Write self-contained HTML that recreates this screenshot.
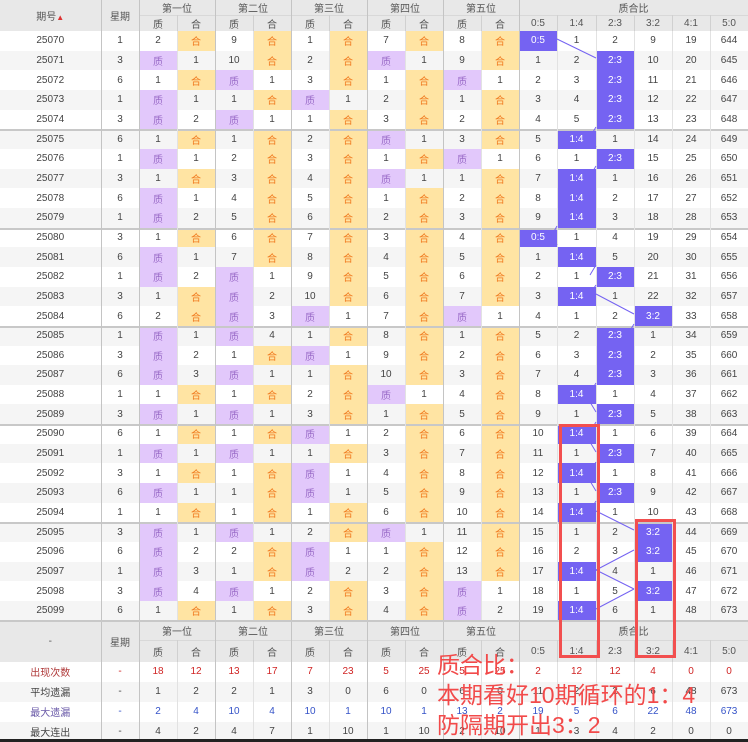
<!DOCTYPE html>
<html><head><meta charset="utf-8"><style>
*{margin:0;padding:0;box-sizing:border-box}
body{width:748px;height:742px;overflow:hidden;background:#fff;font-family:"Liberation Sans","Noto Sans CJK SC",sans-serif;font-size:10px;color:#444;position:relative}
table{border-collapse:collapse;table-layout:fixed;width:748px;position:absolute;left:0;top:0}
td{text-align:center;padding:0;border-right:1px solid #e2e2e2;white-space:nowrap;overflow:hidden}
td.b,th.b{border-right:1px solid #c4c4c4}
.hd td{background:#e8e8e8;color:#555;border-right:1px solid #d0d0d0}
.hd td.b{border-right:1px solid #c4c4c4}
tr.h1 td{height:14px}tr.h2 td{height:15px;border-top:1px solid #d8d8d8}
tr.d td{height:19.67px}
tr.d:nth-child(even) td{background:#f5f5f5}
tr.g td{box-shadow:inset 0 2px 0 #c8c8c8}
td.q{background:#e2c8fb!important;color:#9a6bc8}
td.h{background:#ffe4a3!important;color:#f07a1e}
td.r{background:#7563f2!important;color:#fff}
tr.f1 td{height:20px;border-top:2px solid #c8c8c8}tr.f2 td{height:21px;border-top:1px solid #d8d8d8}
tr.s td{height:20px}
tr.s:nth-child(even) td{background:#f5f5f5}
.red td{color:#d02424}.red td:first-child{color:#b03a3a}
.blu td{color:#3553c8}.blu td:first-child{color:#6a5aa8}
.box{position:absolute;border:3px solid #f24f4f}
.note{position:absolute;left:437px;top:650px;font-size:23px;line-height:30px;color:#f24a4a;white-space:nowrap}
</style></head><body>
<table>
<colgroup><col style="width:101px"><col style="width:38px"><col style="width:38px"><col style="width:38px"><col style="width:38px"><col style="width:38px"><col style="width:38px"><col style="width:38px"><col style="width:38px"><col style="width:38px"><col style="width:38px"><col style="width:38px"><col style="width:38px"><col style="width:39px"><col style="width:38px"><col style="width:38px"><col style="width:38px"><col style="width:38px"></colgroup>
<tr class="hd h1"><td rowspan="2" class="b">期号<span style="color:#d33;font-size:8px">▲</span></td><td rowspan="2" class="b">星期</td><td colspan="2" class="b">第一位</td><td colspan="2" class="b">第二位</td><td colspan="2" class="b">第三位</td><td colspan="2" class="b">第四位</td><td colspan="2" class="b">第五位</td><td colspan="6">质合比</td></tr>
<tr class="hd h2"><td>质</td><td class="b">合</td><td>质</td><td class="b">合</td><td>质</td><td class="b">合</td><td>质</td><td class="b">合</td><td>质</td><td class="b">合</td><td>0:5</td><td>1:4</td><td>2:3</td><td>3:2</td><td>4:1</td><td>5:0</td></tr>
<tr class="d"><td class="b">25070</td><td class="b">1</td><td>2</td><td class="h b">合</td><td>9</td><td class="h b">合</td><td>1</td><td class="h b">合</td><td>7</td><td class="h b">合</td><td>8</td><td class="h b">合</td><td class="r">0:5</td><td>1</td><td>2</td><td>9</td><td>19</td><td>644</td></tr>
<tr class="d"><td class="b">25071</td><td class="b">3</td><td class="q">质</td><td class="b">1</td><td>10</td><td class="h b">合</td><td>2</td><td class="h b">合</td><td class="q">质</td><td class="b">1</td><td>9</td><td class="h b">合</td><td>1</td><td>2</td><td class="r">2:3</td><td>10</td><td>20</td><td>645</td></tr>
<tr class="d"><td class="b">25072</td><td class="b">6</td><td>1</td><td class="h b">合</td><td class="q">质</td><td class="b">1</td><td>3</td><td class="h b">合</td><td>1</td><td class="h b">合</td><td class="q">质</td><td class="b">1</td><td>2</td><td>3</td><td class="r">2:3</td><td>11</td><td>21</td><td>646</td></tr>
<tr class="d"><td class="b">25073</td><td class="b">1</td><td class="q">质</td><td class="b">1</td><td>1</td><td class="h b">合</td><td class="q">质</td><td class="b">1</td><td>2</td><td class="h b">合</td><td>1</td><td class="h b">合</td><td>3</td><td>4</td><td class="r">2:3</td><td>12</td><td>22</td><td>647</td></tr>
<tr class="d"><td class="b">25074</td><td class="b">3</td><td class="q">质</td><td class="b">2</td><td class="q">质</td><td class="b">1</td><td>1</td><td class="h b">合</td><td>3</td><td class="h b">合</td><td>2</td><td class="h b">合</td><td>4</td><td>5</td><td class="r">2:3</td><td>13</td><td>23</td><td>648</td></tr>
<tr class="d g"><td class="b">25075</td><td class="b">6</td><td>1</td><td class="h b">合</td><td>1</td><td class="h b">合</td><td>2</td><td class="h b">合</td><td class="q">质</td><td class="b">1</td><td>3</td><td class="h b">合</td><td>5</td><td class="r">1:4</td><td>1</td><td>14</td><td>24</td><td>649</td></tr>
<tr class="d"><td class="b">25076</td><td class="b">1</td><td class="q">质</td><td class="b">1</td><td>2</td><td class="h b">合</td><td>3</td><td class="h b">合</td><td>1</td><td class="h b">合</td><td class="q">质</td><td class="b">1</td><td>6</td><td>1</td><td class="r">2:3</td><td>15</td><td>25</td><td>650</td></tr>
<tr class="d"><td class="b">25077</td><td class="b">3</td><td>1</td><td class="h b">合</td><td>3</td><td class="h b">合</td><td>4</td><td class="h b">合</td><td class="q">质</td><td class="b">1</td><td>1</td><td class="h b">合</td><td>7</td><td class="r">1:4</td><td>1</td><td>16</td><td>26</td><td>651</td></tr>
<tr class="d"><td class="b">25078</td><td class="b">6</td><td class="q">质</td><td class="b">1</td><td>4</td><td class="h b">合</td><td>5</td><td class="h b">合</td><td>1</td><td class="h b">合</td><td>2</td><td class="h b">合</td><td>8</td><td class="r">1:4</td><td>2</td><td>17</td><td>27</td><td>652</td></tr>
<tr class="d"><td class="b">25079</td><td class="b">1</td><td class="q">质</td><td class="b">2</td><td>5</td><td class="h b">合</td><td>6</td><td class="h b">合</td><td>2</td><td class="h b">合</td><td>3</td><td class="h b">合</td><td>9</td><td class="r">1:4</td><td>3</td><td>18</td><td>28</td><td>653</td></tr>
<tr class="d g"><td class="b">25080</td><td class="b">3</td><td>1</td><td class="h b">合</td><td>6</td><td class="h b">合</td><td>7</td><td class="h b">合</td><td>3</td><td class="h b">合</td><td>4</td><td class="h b">合</td><td class="r">0:5</td><td>1</td><td>4</td><td>19</td><td>29</td><td>654</td></tr>
<tr class="d"><td class="b">25081</td><td class="b">6</td><td class="q">质</td><td class="b">1</td><td>7</td><td class="h b">合</td><td>8</td><td class="h b">合</td><td>4</td><td class="h b">合</td><td>5</td><td class="h b">合</td><td>1</td><td class="r">1:4</td><td>5</td><td>20</td><td>30</td><td>655</td></tr>
<tr class="d"><td class="b">25082</td><td class="b">1</td><td class="q">质</td><td class="b">2</td><td class="q">质</td><td class="b">1</td><td>9</td><td class="h b">合</td><td>5</td><td class="h b">合</td><td>6</td><td class="h b">合</td><td>2</td><td>1</td><td class="r">2:3</td><td>21</td><td>31</td><td>656</td></tr>
<tr class="d"><td class="b">25083</td><td class="b">3</td><td>1</td><td class="h b">合</td><td class="q">质</td><td class="b">2</td><td>10</td><td class="h b">合</td><td>6</td><td class="h b">合</td><td>7</td><td class="h b">合</td><td>3</td><td class="r">1:4</td><td>1</td><td>22</td><td>32</td><td>657</td></tr>
<tr class="d"><td class="b">25084</td><td class="b">6</td><td>2</td><td class="h b">合</td><td class="q">质</td><td class="b">3</td><td class="q">质</td><td class="b">1</td><td>7</td><td class="h b">合</td><td class="q">质</td><td class="b">1</td><td>4</td><td>1</td><td>2</td><td class="r">3:2</td><td>33</td><td>658</td></tr>
<tr class="d g"><td class="b">25085</td><td class="b">1</td><td class="q">质</td><td class="b">1</td><td class="q">质</td><td class="b">4</td><td>1</td><td class="h b">合</td><td>8</td><td class="h b">合</td><td>1</td><td class="h b">合</td><td>5</td><td>2</td><td class="r">2:3</td><td>1</td><td>34</td><td>659</td></tr>
<tr class="d"><td class="b">25086</td><td class="b">3</td><td class="q">质</td><td class="b">2</td><td>1</td><td class="h b">合</td><td class="q">质</td><td class="b">1</td><td>9</td><td class="h b">合</td><td>2</td><td class="h b">合</td><td>6</td><td>3</td><td class="r">2:3</td><td>2</td><td>35</td><td>660</td></tr>
<tr class="d"><td class="b">25087</td><td class="b">6</td><td class="q">质</td><td class="b">3</td><td class="q">质</td><td class="b">1</td><td>1</td><td class="h b">合</td><td>10</td><td class="h b">合</td><td>3</td><td class="h b">合</td><td>7</td><td>4</td><td class="r">2:3</td><td>3</td><td>36</td><td>661</td></tr>
<tr class="d"><td class="b">25088</td><td class="b">1</td><td>1</td><td class="h b">合</td><td>1</td><td class="h b">合</td><td>2</td><td class="h b">合</td><td class="q">质</td><td class="b">1</td><td>4</td><td class="h b">合</td><td>8</td><td class="r">1:4</td><td>1</td><td>4</td><td>37</td><td>662</td></tr>
<tr class="d"><td class="b">25089</td><td class="b">3</td><td class="q">质</td><td class="b">1</td><td class="q">质</td><td class="b">1</td><td>3</td><td class="h b">合</td><td>1</td><td class="h b">合</td><td>5</td><td class="h b">合</td><td>9</td><td>1</td><td class="r">2:3</td><td>5</td><td>38</td><td>663</td></tr>
<tr class="d g"><td class="b">25090</td><td class="b">6</td><td>1</td><td class="h b">合</td><td>1</td><td class="h b">合</td><td class="q">质</td><td class="b">1</td><td>2</td><td class="h b">合</td><td>6</td><td class="h b">合</td><td>10</td><td class="r">1:4</td><td>1</td><td>6</td><td>39</td><td>664</td></tr>
<tr class="d"><td class="b">25091</td><td class="b">1</td><td class="q">质</td><td class="b">1</td><td class="q">质</td><td class="b">1</td><td>1</td><td class="h b">合</td><td>3</td><td class="h b">合</td><td>7</td><td class="h b">合</td><td>11</td><td>1</td><td class="r">2:3</td><td>7</td><td>40</td><td>665</td></tr>
<tr class="d"><td class="b">25092</td><td class="b">3</td><td>1</td><td class="h b">合</td><td>1</td><td class="h b">合</td><td class="q">质</td><td class="b">1</td><td>4</td><td class="h b">合</td><td>8</td><td class="h b">合</td><td>12</td><td class="r">1:4</td><td>1</td><td>8</td><td>41</td><td>666</td></tr>
<tr class="d"><td class="b">25093</td><td class="b">6</td><td class="q">质</td><td class="b">1</td><td>1</td><td class="h b">合</td><td class="q">质</td><td class="b">1</td><td>5</td><td class="h b">合</td><td>9</td><td class="h b">合</td><td>13</td><td>1</td><td class="r">2:3</td><td>9</td><td>42</td><td>667</td></tr>
<tr class="d"><td class="b">25094</td><td class="b">1</td><td>1</td><td class="h b">合</td><td>1</td><td class="h b">合</td><td>1</td><td class="h b">合</td><td>6</td><td class="h b">合</td><td>10</td><td class="h b">合</td><td>14</td><td class="r">1:4</td><td>1</td><td>10</td><td>43</td><td>668</td></tr>
<tr class="d g"><td class="b">25095</td><td class="b">3</td><td class="q">质</td><td class="b">1</td><td class="q">质</td><td class="b">1</td><td>2</td><td class="h b">合</td><td class="q">质</td><td class="b">1</td><td>11</td><td class="h b">合</td><td>15</td><td>1</td><td>2</td><td class="r">3:2</td><td>44</td><td>669</td></tr>
<tr class="d"><td class="b">25096</td><td class="b">6</td><td class="q">质</td><td class="b">2</td><td>2</td><td class="h b">合</td><td class="q">质</td><td class="b">1</td><td>1</td><td class="h b">合</td><td>12</td><td class="h b">合</td><td>16</td><td>2</td><td>3</td><td class="r">3:2</td><td>45</td><td>670</td></tr>
<tr class="d"><td class="b">25097</td><td class="b">1</td><td class="q">质</td><td class="b">3</td><td>1</td><td class="h b">合</td><td class="q">质</td><td class="b">2</td><td>2</td><td class="h b">合</td><td>13</td><td class="h b">合</td><td>17</td><td class="r">1:4</td><td>4</td><td>1</td><td>46</td><td>671</td></tr>
<tr class="d"><td class="b">25098</td><td class="b">3</td><td class="q">质</td><td class="b">4</td><td class="q">质</td><td class="b">1</td><td>2</td><td class="h b">合</td><td>3</td><td class="h b">合</td><td class="q">质</td><td class="b">1</td><td>18</td><td>1</td><td>5</td><td class="r">3:2</td><td>47</td><td>672</td></tr>
<tr class="d"><td class="b">25099</td><td class="b">6</td><td>1</td><td class="h b">合</td><td>1</td><td class="h b">合</td><td>3</td><td class="h b">合</td><td>4</td><td class="h b">合</td><td class="q">质</td><td class="b">2</td><td>19</td><td class="r">1:4</td><td>6</td><td>1</td><td>48</td><td>673</td></tr>
<tr class="hd f1"><td rowspan="2" class="b">-</td><td rowspan="2" class="b">星期</td><td colspan="2" class="b">第一位</td><td colspan="2" class="b">第二位</td><td colspan="2" class="b">第三位</td><td colspan="2" class="b">第四位</td><td colspan="2" class="b">第五位</td><td colspan="6">质合比</td></tr>
<tr class="hd f2"><td>质</td><td class="b">合</td><td>质</td><td class="b">合</td><td>质</td><td class="b">合</td><td>质</td><td class="b">合</td><td>质</td><td class="b">合</td><td>0:5</td><td>1:4</td><td>2:3</td><td>3:2</td><td>4:1</td><td>5:0</td></tr>
<tr class="s red"><td class="b">出现次数</td><td class="b">-</td><td>18</td><td class="b">12</td><td>13</td><td class="b">17</td><td>7</td><td class="b">23</td><td>5</td><td class="b">25</td><td>5</td><td class="b">25</td><td>2</td><td>12</td><td>12</td><td>4</td><td>0</td><td>0</td></tr>
<tr class="s"><td class="b">平均遗漏</td><td class="b">-</td><td>1</td><td class="b">2</td><td>2</td><td class="b">1</td><td>3</td><td class="b">0</td><td>6</td><td class="b">0</td><td>6</td><td class="b">0</td><td>11</td><td>2</td><td>2</td><td>6</td><td>48</td><td>673</td></tr>
<tr class="s blu"><td class="b">最大遗漏</td><td class="b">-</td><td>2</td><td class="b">4</td><td>10</td><td class="b">4</td><td>10</td><td class="b">1</td><td>10</td><td class="b">1</td><td>13</td><td class="b">2</td><td>19</td><td>5</td><td>6</td><td>22</td><td>48</td><td>673</td></tr>
<tr class="s"><td class="b">最大连出</td><td class="b">-</td><td>4</td><td class="b">2</td><td>4</td><td class="b">7</td><td>1</td><td class="b">10</td><td>1</td><td class="b">10</td><td>2</td><td class="b">10</td><td>1</td><td>3</td><td>4</td><td>2</td><td>0</td><td>0</td></tr>
</table>
<svg width="748" height="742" style="position:absolute;left:0;top:0" fill="none" stroke="#7563f2" stroke-width="1">
<path d="M557,39L596,58 M596,127L590,137 M590,137L596,147 M596,166L590,176 M557,226L552,235 M552,235L557,245 M596,265L590,275 M596,285L590,294 M596,294L634,314 M634,324L628,334 M596,383L590,393 M590,402L596,412 M596,422L590,432 M590,442L596,452 M596,462L590,471 M590,481L596,491 M596,501L590,511 M596,511L634,530 M634,550L596,570 M596,570L634,589 M634,589L596,609"/>
</svg>
<div style="position:absolute;left:0;top:739px;width:748px;height:3px;background:#222"></div>
<div class="box" style="left:559px;top:424px;width:41px;height:234px"></div>
<div class="box" style="left:635px;top:519px;width:41px;height:139px"></div>
<div class="note">质合比：<br>本期看好10期循环的1：4<br>防隔期开出3：2</div>
</body></html>
